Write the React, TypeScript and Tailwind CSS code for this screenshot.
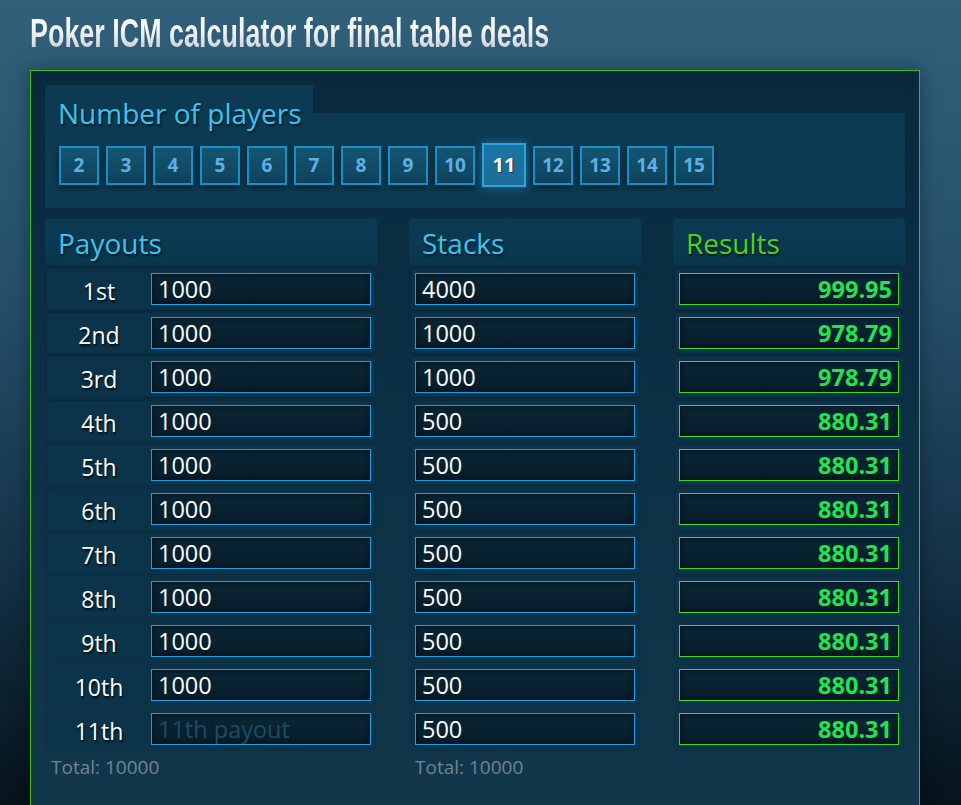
import React from "react";

const ordinals = ["1st", "2nd", "3rd", "4th", "5th", "6th", "7th", "8th", "9th", "10th", "11th"];
const stacks = ["4000", "1000", "1000", "500", "500", "500", "500", "500", "500", "500", "500"];
const results = ["999.95", "978.79", "978.79", "880.31", "880.31", "880.31", "880.31", "880.31", "880.31", "880.31", "880.31"];
const players = [2, 3, 4, 5, 6, 7, 8, 9, 10, 11, 12, 13, 14, 15];

const inputBase =
  "h-[32px] w-[220px] border bg-[linear-gradient(180deg,#0a2636_0%,#071d2a_100%)] text-[23.5px] leading-[30px] outline-none shadow-[inset_0_0_6px_rgba(0,0,0,0.6)]";

function Header({ title, color }: { title: string; color: string }) {
  return (
    <div
      className={`h-[46px] rounded-t-[3px] bg-[linear-gradient(180deg,#0b3c55_0%,#0a364c_100%)] px-[13px] pt-[6px] text-[28px] leading-[36px] [text-shadow:1px_2px_2px_rgba(0,0,0,0.6)] ${color}`}
    >
      {title}
    </div>
  );
}

export default function App() {
  return (
    <div className="h-[805px] w-full overflow-hidden bg-[linear-gradient(180deg,#31607a_0%,#26506a_35%,#143247_70%,#06131b_100%)] font-['Open_Sans','Noto_Sans',sans-serif]">
      <div className="h-[70px] pl-[30px] pt-[13px]">
        <h1 className="origin-left scale-x-[0.673] whitespace-nowrap bg-[linear-gradient(180deg,#ffffff_0%,#f2f4f6_45%,#c4cacf_100%)] bg-clip-text font-['Liberation_Sans',Arial,sans-serif] text-[40px] font-bold leading-[40px] text-transparent">
          Poker ICM calculator for final table deals
        </h1>
      </div>

      <div className="ml-[30px] w-[890px] border border-[#3cbc1a] bg-[linear-gradient(180deg,#0a293c_0%,#0b2e43_30%,#0f3448_70%,#13384c_100%)] px-[14px] pb-[80px] pt-[14px] shadow-[0_0_18px_rgba(0,0,0,0.35)]">
        <div className="h-[123px] rounded-t-[3px] pt-[10px] [background:linear-gradient(to_right,transparent_268px,#0a2a3e_268px)_top/100%_28px_no-repeat,linear-gradient(180deg,#0c3a52_0%,#0c3a51_60%,#0d3b53_100%)]">
          <div className="pl-[13px] text-[28px] leading-[36px] text-[#3ec3f0] [text-shadow:1px_2px_2px_rgba(0,0,0,0.6)]">
            Number of players
          </div>
          <div className="mt-[12px] flex h-[44px] items-center gap-[7px] pl-[14px]">
            {players.map((p) =>
              p === 11 ? (
                <div
                  key={p}
                  className="flex h-[44px] w-[44px] items-center justify-center border-2 border-[#2aa4de] bg-[linear-gradient(180deg,#1a75a3_0%,#1c6e98_100%)] text-[20px] font-bold text-white shadow-[0_0_10px_rgba(40,150,210,0.55)] [text-shadow:1px_1px_1px_rgba(0,0,0,0.5)]"
                >
                  {p}
                </div>
              ) : (
                <div
                  key={p}
                  className="flex h-[39px] w-[40px] items-center justify-center border-2 border-[#1690c8] bg-[linear-gradient(180deg,#155571_0%,#0f425d_100%)] text-[19px] font-bold text-[#5cb0e6] shadow-[0_3px_6px_rgba(0,0,0,0.45)]"
                >
                  {p}
                </div>
              )
            )}
          </div>
        </div>

        <div className="mt-[11px] flex gap-[32px]">
          <div className="w-[332px]">
            <Header title="Payouts" color="text-[#3ec3f0]" />
            <div className="mt-[4px] flex flex-col gap-[4px] px-[2px]">
              {ordinals.map((o, i) => (
                <div key={o} className="flex h-[40px] items-center rounded-[3px] bg-[#0b344a] shadow-[0_0_3px_rgba(0,0,0,0.25)]">
                  <div className="w-[104px] pt-[3px] text-center text-[23px] leading-[30px] text-white [text-shadow:1px_2px_2px_rgba(0,0,0,0.8)]">
                    {o}
                  </div>
                  <input
                    readOnly
                    defaultValue={i < 10 ? "1000" : ""}
                    placeholder={i < 10 ? "" : "11th payout"}
                    className={`${inputBase} border-[#1c9fe4] pl-[6px] text-white placeholder:text-[#1f4b62]`}
                  />
                </div>
              ))}
            </div>
            <div className="mt-[5px] pl-[6px] text-[19px] leading-[26px] text-[#6f8593]">Total: 10000</div>
          </div>

          <div className="w-[232px]">
            <Header title="Stacks" color="text-[#3ec3f0]" />
            <div className="mt-[4px] flex flex-col gap-[4px] px-[2px]">
              {stacks.map((s, i) => (
                <div key={i} className="flex h-[40px] items-center justify-center rounded-[3px] bg-[#0b344a] shadow-[0_0_3px_rgba(0,0,0,0.25)]">
                  <input
                    readOnly
                    defaultValue={s}
                    className={`${inputBase} border-[#1c9fe4] pl-[6px] text-white`}
                  />
                </div>
              ))}
            </div>
            <div className="mt-[5px] pl-[6px] text-[19px] leading-[26px] text-[#6f8593]">Total: 10000</div>
          </div>

          <div className="w-[232px]">
            <Header title="Results" color="text-[#4fd21a]" />
            <div className="mt-[4px] flex flex-col gap-[4px] px-[2px]">
              {results.map((r, i) => (
                <div key={i} className="flex h-[40px] items-center justify-center rounded-[3px] bg-[#0b344a] shadow-[0_0_3px_rgba(0,0,0,0.25)]">
                  <input
                    readOnly
                    defaultValue={r}
                    className={`${inputBase} border-[#36dd1c] pr-[6px] text-right font-bold text-[#1fe64c]`}
                  />
                </div>
              ))}
            </div>
          </div>
        </div>
      </div>
    </div>
  );
}
